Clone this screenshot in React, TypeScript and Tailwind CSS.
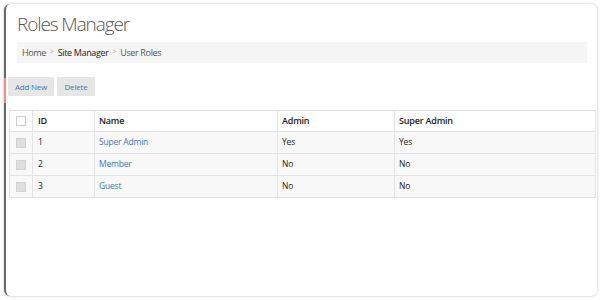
import React from "react";

type Role = { id: number; name: string; admin: string; superAdmin: string };

const roles: Role[] = [
  { id: 1, name: "Super Admin", admin: "Yes", superAdmin: "Yes" },
  { id: 2, name: "Member", admin: "No", superAdmin: "No" },
  { id: 3, name: "Guest", admin: "No", superAdmin: "No" },
];

export default function App() {
  return (
    <div className="w-[602px] h-[300px] bg-white p-[4px] pr-[5px] pb-[4px] font-['Open_Sans',sans-serif]">
      <div className="relative h-full rounded-[6px] bg-white border-l-2 border-l-[#6a6a6a] shadow-[0_0_3px_rgba(0,0,0,0.25)]">
        {/* red edge marker */}
        <span className="absolute -left-[2px] top-[74px] h-[25px] w-[2px] bg-[#f08a8a]" />

        {/* HEADER */}
        <div className="pl-[11px] pr-[10px] pt-[7px]">
          <h1 className="text-[19px] leading-[27px] font-light text-[#555] tracking-[-1.1px]">
            Roles Manager
          </h1>
          <div className="mt-[4px] h-[21px] bg-[#f5f5f5] flex items-center pl-[5px] text-[9px] tracking-[-0.35px] text-[#555]">
            <span>Home</span>
            <span className="mx-[4px] text-[#aaa] text-[7px]">&gt;</span>
            <span className="text-[#222]">Site Manager</span>
            <span className="mx-[4px] text-[#aaa] text-[7px]">&gt;</span>
            <span>User Roles</span>
          </div>
        </div>

        {/* ACTIONS */}
        <div className="flex gap-[3px] pl-[2px] mt-[14px]">
          <button className="h-[19px] w-[46px] bg-[#e6e6e6] text-[8px] tracking-[-0.2px] text-[#4079bb] rounded-[1px]">
            Add New
          </button>
          <button className="h-[19px] w-[38px] bg-[#e6e6e6] text-[8px] tracking-[-0.2px] text-[#4079bb] rounded-[1px]">
            Delete
          </button>
        </div>

        {/* TABLE */}
        <div className="mt-[14px] ml-[3px] mr-[1px]">
          <table className="w-[587px] border-collapse text-[8.5px] tracking-[-0.2px] text-[#222]">
            <thead>
              <tr className="h-[21px] bg-white">
                <th className="w-[23px] border border-[#e3e3e3]">
                  <span className="block mx-auto w-[10px] h-[10px] bg-white border border-[#cfcfcf]" />
                </th>
                <th className="w-[62px] border border-[#e3e3e3] text-left text-[9px] font-semibold pl-[5px]">ID</th>
                <th className="w-[183px] border border-[#e3e3e3] text-left text-[9px] font-semibold pl-[4px]">Name</th>
                <th className="w-[117px] border border-[#e3e3e3] text-left text-[9px] font-semibold pl-[4px]">Admin</th>
                <th className="border border-[#e3e3e3] text-left text-[9px] font-semibold pl-[4px]">Super Admin</th>
              </tr>
            </thead>
            <tbody>
              {roles.map((r) => (
                <tr key={r.id} className="h-[22px] bg-[#f8f8f8]">
                  <td className="border border-[#e3e3e3]">
                    <span className="block mx-auto w-[10px] h-[10px] bg-[#dedede] border border-[#d2d2d2]" />
                  </td>
                  <td className="border border-[#e3e3e3] pl-[5px]">{r.id}</td>
                  <td className="border border-[#e3e3e3] pl-[4px] text-[#4079bb]">{r.name}</td>
                  <td className="border border-[#e3e3e3] pl-[4px]">{r.admin}</td>
                  <td className="border border-[#e3e3e3] pl-[4px]">{r.superAdmin}</td>
                </tr>
              ))}
            </tbody>
          </table>
        </div>
      </div>
    </div>
  );
}
